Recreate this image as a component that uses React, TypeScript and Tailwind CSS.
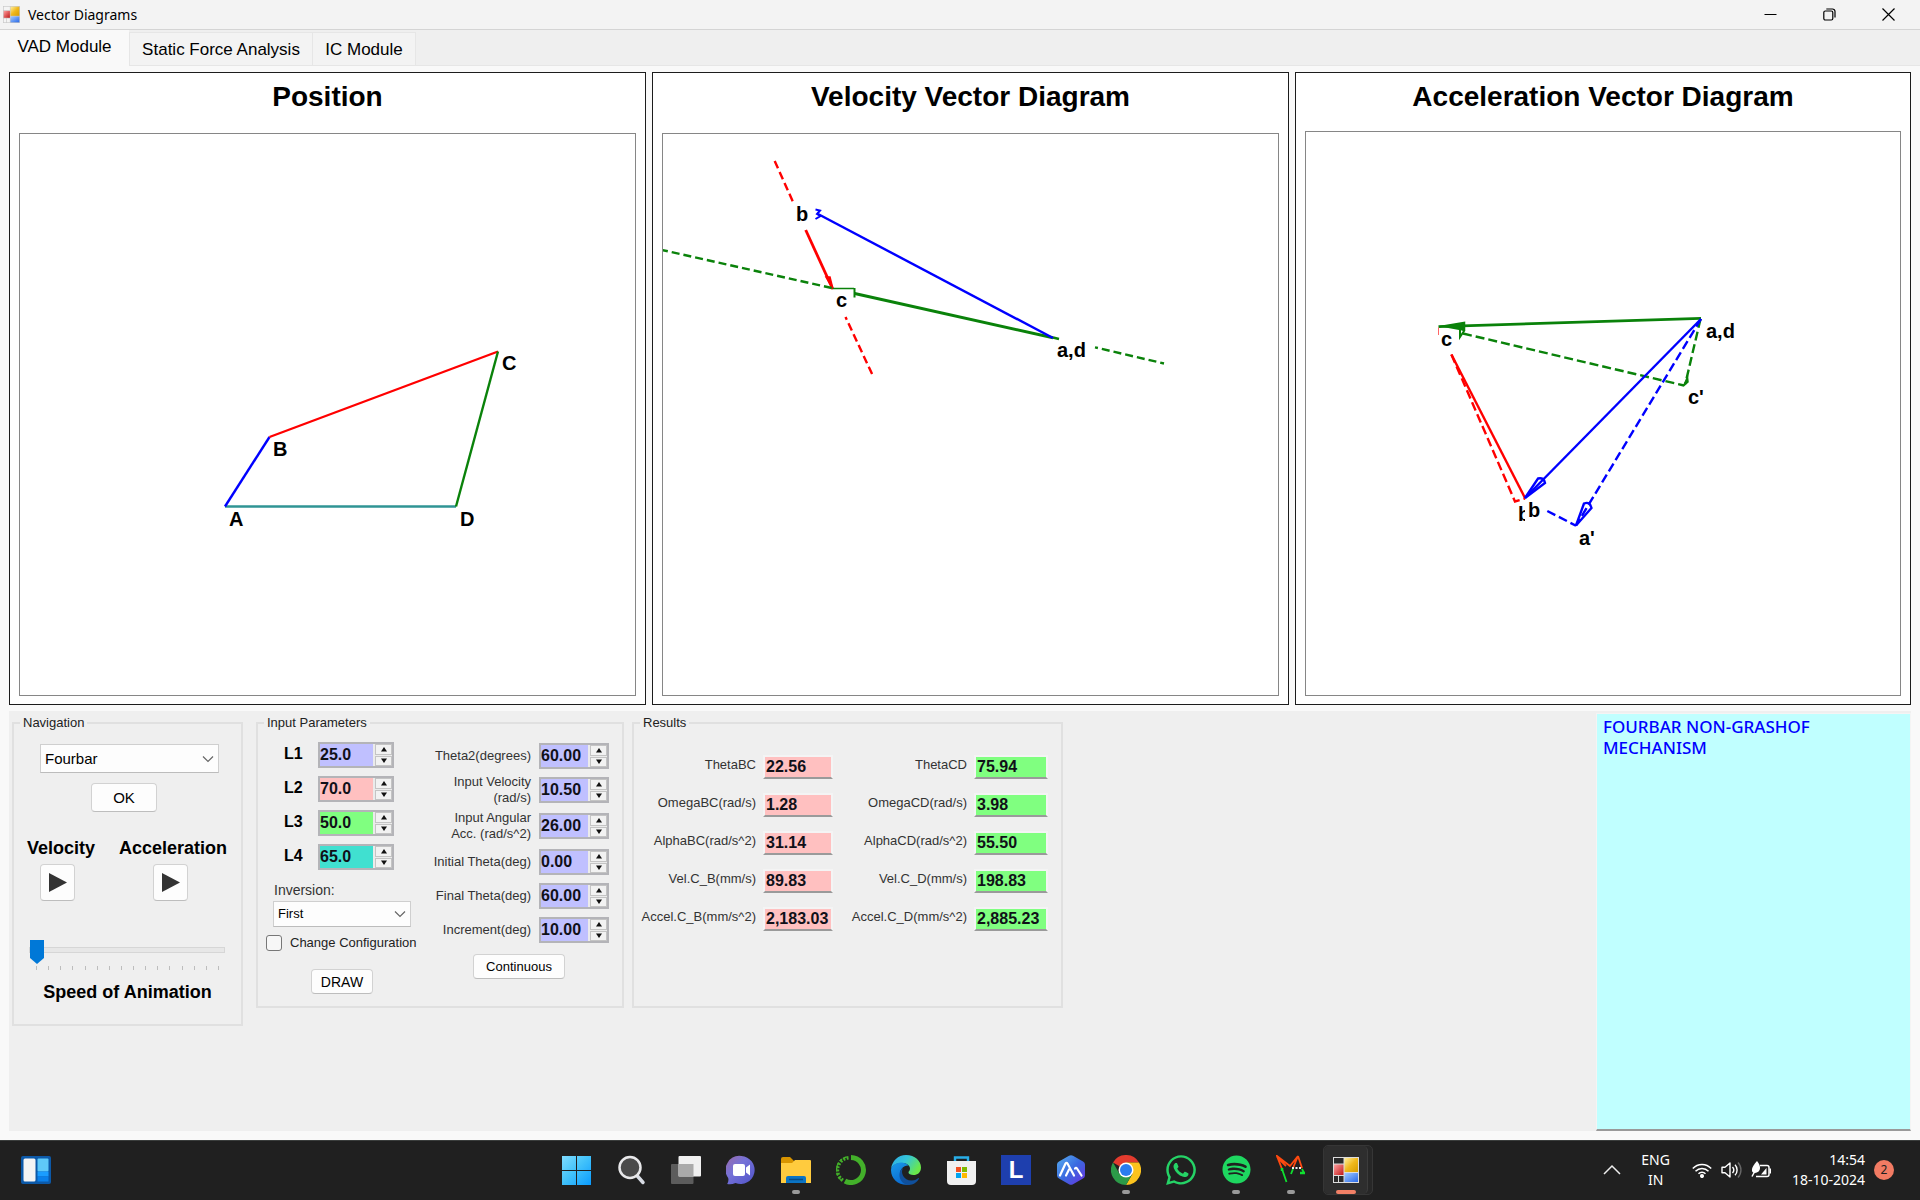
import React, { useState } from "react";
import { FaWhatsapp, FaSpotify } from "react-icons/fa";

type Tint = "blue" | "red" | "green" | "teal";

const tints: Record<Tint, string> = {
  blue: "bg-[#c0c0ff]",
  red: "bg-[#ffc0c0]",
  green: "bg-[#80ff80]",
  teal: "bg-[#40e0d0]",
};

const smallButton =
  "rounded-[4px] border border-[#d2d2d2] border-b-[#bdbdbd] bg-[#fdfdfd] text-center text-black";

function Spinner({ id, value, tint, wide }: { id: string; value: string; tint: Tint; wide?: boolean }) {
  const [text, setText] = useState(value);
  const step = (delta: number) => {
    const decimals = (value.split(".")[1] ?? "").length;
    setText((Number(text) + delta).toFixed(decimals));
  };
  return (
    <div
      className={`flex h-[26px] items-stretch border-2 border-[#b4b4b8] bg-[#ebebeb] ${wide ? "w-[76px]" : "w-[70px]"}`}
    >
      <input
        id={id}
        value={text}
        onChange={(e) => setText(e.target.value)}
        className={`min-w-0 flex-1 text-[16px] leading-5 font-bold text-[#101018] outline-none ${tints[tint]}`}
      />
      <div className="flex w-[19px] flex-col gap-px pl-[2px]">
        <button
          type="button"
          aria-label={`Increase ${id}`}
          onClick={() => step(1)}
          className="flex flex-1 items-center justify-center border border-[#c4c4c4] bg-[#f2f2f2]"
        >
          <svg width="8" height="5" viewBox="0 0 8 5">
            <path d="M4 0 7 4.500H1z" fill="#111" />
          </svg>
        </button>
        <button
          type="button"
          aria-label={`Decrease ${id}`}
          onClick={() => step(-1)}
          className="flex flex-1 items-center justify-center border border-[#c4c4c4] bg-[#f2f2f2]"
        >
          <svg width="8" height="5" viewBox="0 0 8 5">
            <path d="M4 5 7 .5H1z" fill="#111" />
          </svg>
        </button>
      </div>
    </div>
  );
}

function DropDown({ id, label, options, className }: { id: string; label: string; options: string[]; className: string }) {
  return (
    <div className={`relative ${className}`}>
      <select
        id={id}
        aria-label={label}
        className="h-full w-full appearance-none border border-[#cfcfcf] border-b-[#bcbcbc] bg-[#fdfdfd] pl-1 text-black outline-none"
      >
        {options.map((o) => (
          <option key={o}>{o}</option>
        ))}
      </select>
      <svg
        className="pointer-events-none absolute top-1/2 right-[5px] -translate-y-1/2"
        width="12"
        height="8"
        viewBox="0 0 12 8"
        fill="none"
        stroke="#666"
        strokeWidth="1.2"
      >
        <path d="M1 1.500 6 6.500 11 1.500" />
      </svg>
    </div>
  );
}

function Group({ title, className, children }: { title: string; className: string; children: React.ReactNode }) {
  return (
    <fieldset className={`border-2 border-[#e0e0e0] text-[13px] leading-4 ${className}`}>
      <legend className="ml-[6px] px-[3px] text-[#222]">{title}</legend>
      {children}
    </fieldset>
  );
}

function Chart({ title, titleClass, children }: { title: string; titleClass: string; children: React.ReactNode }) {
  return (
    <section className="flex flex-col border border-[#1c1c1c] bg-white px-[9px] pb-2">
      <h2 className={`text-center text-[28px] font-bold text-black ${titleClass}`}>{title}</h2>
      <div className="flex-1 border border-[#868686] bg-white">{children}</div>
    </section>
  );
}

const chartText = "font-['Liberation_Sans',sans-serif] text-[20px] font-bold";

function PositionDiagram() {
  return (
    <svg className="block h-auto w-full" viewBox="20 134 615 561" fill="none" strokeWidth="2.4">
      <path d="M225 506.500H456" stroke="#2f9494" />
      <path d="M225 506.500 269.500 437" stroke="#00f" />
      <path d="M269.500 437 498 351.500" stroke="#f00" />
      <path d="M498 351.500 456 506.500" stroke="#0a820a" />
      <g className={chartText} fill="#000">
        <text x="229" y="526">A</text>
        <text x="273" y="456">B</text>
        <text x="502" y="370">C</text>
        <text x="460" y="526">D</text>
      </g>
    </svg>
  );
}

function VelocityDiagram() {
  return (
    <svg className="block h-auto w-full" viewBox="663 134 615 561" fill="none" strokeWidth="2.4">
      <path d="M774.700 161 793.500 203" stroke="#f00" strokeDasharray="8 4" />
      <path d="M845.500 317 872.500 375" stroke="#f00" strokeDasharray="8 4" strokeDashoffset="5" />
      <path d="M805.700 230 832.700 289" stroke="#f00" strokeWidth="2.800" />
      <path d="M826 277 833 289 830 277z" stroke="#f00" fill="#f00" strokeWidth="1.500" />
      <path d="M660 249.500 831.800 288" stroke="#0a820a" strokeDasharray="8 4" />
      <path d="M832.600 288.500H854" stroke="#0a820a" strokeWidth="1.500" />
      <path d="M854.500 288v9.500" stroke="#0a820a" strokeWidth="2" />
      <path d="M854.700 293.500 1053 337.800" stroke="#0a820a" strokeWidth="3" />
      <path d="M1053 337.500 1059 339" stroke="#0a820a" />
      <path d="M1095 347.300 1164 363.500" stroke="#0a820a" strokeDasharray="8 4" strokeDashoffset="5" />
      <path d="M818 214 1053 338" stroke="#00f" />
      <path d="M815.500 209.500 820 210.500 817 214 820.500 216 815.500 219" stroke="#00f" strokeWidth="2" />
      <g className={chartText} fill="#000">
        <text x="796" y="221">b</text>
        <text x="836" y="307">c</text>
        <text x="1057" y="357">a,d</text>
      </g>
    </svg>
  );
}

function AccelerationDiagram() {
  return (
    <svg className="block h-auto w-full" viewBox="1306 132 594 562" fill="none" strokeWidth="2.4">
      <path d="M1438.500 326.700 1701 318.300" stroke="#0a820a" strokeWidth="2.800" />
      <path d="M1440 326.500 1464.500 322.500V331" stroke="#0a820a" fill="#0a820a" strokeWidth="1.500" />
      <path d="M1461 326.500 1464 331 1460 337V328" stroke="#0a820a" strokeWidth="2" />
      <path d="M1463 333.500 1684 385.500" stroke="#0a820a" strokeDasharray="9 4" />
      <path d="M1700.500 319 1685.300 384" stroke="#0a820a" strokeDasharray="9 4" />
      <path d="M1687.500 377 1688 382 1683.500 386z" stroke="#0a820a" fill="#0a820a" strokeWidth="1.500" />
      <path d="M1438.500 327.500V335" stroke="#f66" strokeWidth="1" />
      <path d="M1451.400 354.500 1525 498" stroke="#f00" />
      <path d="M1451.400 354.500 1515 501.500 1525 498.500" stroke="#f00" strokeDasharray="9 4" />
      <path d="M1701 319 1525 498" stroke="#00f" />
      <path d="M1525 498 1538 478.500Q1544 477 1545 483z" stroke="#00f" strokeWidth="2.400" />
      <path d="M1701 319 1576 525.500" stroke="#00f" strokeDasharray="9 4" />
      <path d="M1576 525.500 1584 503.500Q1590 501 1591.500 508z" stroke="#00f" strokeWidth="2.400" />
      <path d="M1547.300 511 1576 525.700" stroke="#00f" strokeDasharray="9 4" />
      <g className={chartText} fill="#000">
        <text x="1441" y="346">c</text>
        <text x="1706" y="338">a,d</text>
        <text x="1688" y="404">c&#39;</text>
        <text x="1518" y="521">b&#39;</text>
        <path d="M1525 502h20v22h-20z" fill="#fff" />
        <text x="1528" y="517">b</text>
        <text x="1579" y="545">a&#39;</text>
      </g>
    </svg>
  );
}

/* Window and taskbar icon of a WinForms application. */
function FormsIcon({ size, dark }: { size: number; dark?: boolean }) {
  return (
    <svg width={size} height={size} viewBox="0 0 26 26">
      <defs>
        <linearGradient id="fy" x1="0" y1="0" x2="1" y2="1">
          <stop offset="0" stopColor="#fff0a0" />
          <stop offset=".5" stopColor="#f0b81c" />
          <stop offset="1" stopColor="#d69c00" />
        </linearGradient>
        <linearGradient id="fr" x1="0" y1="0" x2="1" y2="1">
          <stop offset="0" stopColor="#ffa0a0" />
          <stop offset="1" stopColor="#c01818" />
        </linearGradient>
        <linearGradient id="fb" x1="0" y1="0" x2="1" y2="1">
          <stop offset="0" stopColor="#a0c8ff" />
          <stop offset="1" stopColor="#2a6ae8" />
        </linearGradient>
      </defs>
      <rect width="26" height="26" fill={dark ? "#ddd" : "#c8c8c8"} />
      <rect x="1" y="1" width="9.500" height="5.500" fill={dark ? "#2b2b2b" : "#f4f4f4"} />
      <rect x="1" y="7.500" width="9.500" height="10.500" fill="url(#fr)" />
      <rect x="1" y="19" width="4" height="6" fill={dark ? "#2b2b2b" : "#f4f4f4"} />
      <rect x="6" y="19" width="4.500" height="6" fill={dark ? "#2b2b2b" : "#f4f4f4"} />
      <rect x="11.500" y="1" width="13.500" height="14" fill="url(#fy)" />
      <rect x="11.500" y="16" width="13.500" height="9" fill="url(#fb)" />
    </svg>
  );
}

function WidgetsIcon() {
  return (
    <svg width="30" height="28" viewBox="0 0 30 28">
      <rect width="30" height="28" rx="2" fill="#0c59a8" />
      <rect x="2.500" y="2.500" width="12" height="23" rx="1.500" fill="#f4f4f4" />
      <rect x="16.500" y="2.500" width="11" height="13" rx="1" fill="#5fc9f8" />
      <rect x="16.500" y="15.500" width="11" height="5" fill="#1a9dff" />
      <rect x="16.500" y="20.500" width="11" height="5" fill="#0a80ea" />
    </svg>
  );
}

function StartIcon() {
  return (
    <svg width="30" height="30" viewBox="0 0 30 30">
      <defs>
        <linearGradient id="st" x1="0" y1="0" x2="1" y2="1">
          <stop offset="0" stopColor="#80dcff" />
          <stop offset=".45" stopColor="#45c4fa" />
          <stop offset="1" stopColor="#0a9bff" />
        </linearGradient>
      </defs>
      <path d="M1 1h14v14H1zM16 1h14v14H16zM1 16h14v14H1zM16 16h14v14H16z" fill="url(#st)" />
    </svg>
  );
}

function SearchIcon() {
  return (
    <svg width="30" height="30" viewBox="0 0 30 30" fill="none">
      <path d="m20.500 20 6.500 7.500" stroke="#d8dce4" strokeWidth="3.500" strokeLinecap="round" />
      <circle cx="14" cy="12.500" r="10.500" fill="#4a4a4a" stroke="#e8e8ea" strokeWidth="2.500" />
    </svg>
  );
}

function TaskViewIcon() {
  return (
    <svg width="30" height="30" viewBox="0 0 30 30">
      <rect x="0" y="9" width="22.500" height="20" rx="1" fill="#5c5c5c" />
      <rect x="7.500" y="1" width="22.500" height="20.500" rx="1" fill="#f0f0f0" />
      <rect x="7.500" y="9" width="15" height="12.500" fill="#aaa" />
    </svg>
  );
}

function ChatIcon() {
  return (
    <svg width="30" height="30" viewBox="0 0 30 30">
      <defs>
        <linearGradient id="ch" x1="0" y1="0" x2="1" y2="1">
          <stop offset="0" stopColor="#9a6aa8" />
          <stop offset=".4" stopColor="#7672d8" />
          <stop offset="1" stopColor="#4f52c8" />
        </linearGradient>
      </defs>
      <path d="M15.500 1a14 14 0 1 1-6 27Q5 30 1.200 29q1.800-3 1-6A14 14 0 0 1 15.500 1z" fill="url(#ch)" />
      <rect x="7" y="9" width="12" height="12" rx="2" fill="#fff" />
      <path d="m20 12.500 4-3v11l-4-3z" fill="#fff" />
    </svg>
  );
}

function FolderIcon() {
  return (
    <svg width="30" height="30" viewBox="0 0 30 30">
      <path d="M0 4a2 2 0 0 1 2-2h7l4 4v4H0z" fill="#d89400" />
      <path d="M0 8h11l3-3h15a1 1 0 0 1 1 1v22H0z" fill="#ffcb3e" />
      <path d="M5 28v-5a2 2 0 0 1 2-2h16a2 2 0 0 1 2 2v5z" fill="#0b74c4" />
      <path d="M8 24.500h14" stroke="#064b85" strokeWidth="1.500" />
    </svg>
  );
}

function RingIcon() {
  return (
    <svg width="30" height="30" viewBox="0 0 30 30" fill="none" stroke="#43b02a">
      <path d="M15 2.500a12.500 12.500 0 1 1-6 23.500" strokeWidth="5" />
      <path d="M12.500 2.700A12.500 12.500 0 0 0 7 25.500" strokeWidth="3.500" strokeDasharray="2 1.500" />
      <path d="M10.500 2A13.500 13.500 0 0 0 5 25" strokeWidth="1.500" strokeDasharray="3 2" />
    </svg>
  );
}

function EdgeIcon() {
  return (
    <svg width="30" height="30" viewBox="0 0 30 30">
      <defs>
        <linearGradient id="e1" x1="0" y1="0" x2="1" y2=".5">
          <stop offset="0" stopColor="#2ba8e8" />
          <stop offset=".5" stopColor="#35c6d8" />
          <stop offset="1" stopColor="#6ae84a" />
        </linearGradient>
        <linearGradient id="e2" x1="0" y1="0" x2=".5" y2="1">
          <stop offset="0" stopColor="#1a9ae8" />
          <stop offset="1" stopColor="#0a6ad0" />
        </linearGradient>
      </defs>
      <path d="M0 14C1 6 7 0 15 0c9 0 15 6 15 12.500 0 5-3.500 7.500-7.500 7.500-3 0-5-1-5-2.500s1.500-1.500 1.500-4C19 10 15 8 11 8 6 8 1.500 10 0 14z" fill="url(#e1)" />
      <path d="M0 15c0-4 5-8 11-7.500 3 .3 5 1.500 6.500 3C13 10 9 14 9 19c0 6 5 10 10 10.500C9 31.500 0 25 0 15z" fill="url(#e2)" />
      <path d="M12 13c-3 5 1 13 9 12.500 3 0 5-1.500 6.500-2.500.5-.2.800.2.500.6C26 27.500 22 30 18 30 12 29.500 8 25 8.500 19c.2-2.500 1.500-4.800 3.500-6z" fill="#10509c" />
    </svg>
  );
}

function StoreIcon() {
  return (
    <svg width="30" height="30" viewBox="0 0 30 30">
      <path d="M9 7V2.500h13V7" fill="none" stroke="#28aee8" strokeWidth="2.400" />
      <path d="M1 6h29v20a4 4 0 0 1-4 4H5a4 4 0 0 1-4-4z" fill="#f0f0f0" />
      <path d="M10 12h5v5h-5z" fill="#f25022" />
      <path d="M16 12h5v5h-5z" fill="#7fba00" />
      <path d="M10 18h5v5h-5z" fill="#00a4ef" />
      <path d="M16 18h5v5h-5z" fill="#ffb900" />
    </svg>
  );
}

function LIcon() {
  return (
    <span className="flex h-[30px] w-[30px] items-center justify-center bg-[#1e3fae] font-['Liberation_Sans',sans-serif] text-[24px] leading-none font-bold text-white">
      L
    </span>
  );
}

function HexIcon() {
  return (
    <svg width="30" height="30" viewBox="0 0 30 30">
      <defs>
        <linearGradient id="hx" x1="0" y1="0" x2="1" y2="1">
          <stop offset="0" stopColor="#58b0f0" />
          <stop offset=".5" stopColor="#3a6ae0" />
          <stop offset="1" stopColor="#6a30e0" />
        </linearGradient>
      </defs>
      <path d="M13 .8q2-1 4 0l10 5.700q2 1 2 3v11q0 2-2 3l-10 5.700q-2 1-4 0L3 23.500q-2-1-2-3v-11q0-2 2-3z" fill="url(#hx)" />
      <path d="M4 20.500 9.500 8.500q1-1.500 2 0l6.500 12M10 20.500l3-6M19 13.500q1-1.500 2 0l4.500 7" fill="none" stroke="#fff" strokeWidth="2.200" strokeLinecap="round" />
    </svg>
  );
}

function ChromeIcon() {
  return (
    <svg width="30" height="30" viewBox="0 0 30 30">
      <path d="M15 15 2 7.500A15 15 0 0 1 28 7.500H15z" fill="#e33b2e" />
      <path d="M15 7.500h13A15 15 0 0 1 15 30l6.500-11.300z" fill="#fcc31e" />
      <path d="M2 7.500 8.500 18.700 15 22.500l6 -3L15 30A15 15 0 0 1 2 7.500z" fill="#2c9a48" />
      <circle cx="15" cy="15" r="7.500" fill="#fff" />
      <circle cx="15" cy="15" r="6" fill="#2a7cf0" />
    </svg>
  );
}

function MechIcon() {
  return (
    <svg width="30" height="30" viewBox="0 0 30 30" fill="none" strokeWidth="1.800">
      <path d="M6 14 1 1l13 10L22 1M22 1l-5 12M22 1l4 12M1 2l9 9" stroke="#ff4a10" />
      <path d="M6 14 10.500 27M17 14l-2 5M26 14l2 4" stroke="#10e030" />
      <path d="M16 13h10" stroke="#eee" strokeDasharray="2 1.500" />
      <path d="M24 18h5M6 13v3" stroke="#10e030" strokeWidth="2.500" />
    </svg>
  );
}

const apps: { name: string; icon: React.ReactNode; running?: boolean; active?: boolean }[] = [
  { name: "Start", icon: <StartIcon /> },
  { name: "Search", icon: <SearchIcon /> },
  { name: "Task view", icon: <TaskViewIcon /> },
  { name: "Chat", icon: <ChatIcon /> },
  { name: "File Explorer", icon: <FolderIcon />, running: true },
  { name: "Anaconda", icon: <RingIcon /> },
  { name: "Edge", icon: <EdgeIcon /> },
  { name: "Store", icon: <StoreIcon /> },
  { name: "L", icon: <LIcon /> },
  { name: "Hex", icon: <HexIcon /> },
  { name: "Chrome", icon: <ChromeIcon />, running: true },
  { name: "WhatsApp", icon: <FaWhatsapp size={34} color="#25d366" /> },
  { name: "Spotify", icon: <FaSpotify size={29} color="#1ed760" />, running: true },
  { name: "Mechanism", icon: <MechIcon />, running: true },
  { name: "Vector Diagrams", icon: <FormsIcon size={26} dark />, active: true },
];

function Taskbar() {
  return (
    <footer className="grid h-[60px] grid-cols-[1fr_auto_1fr] items-center border-t border-[#3a3d3c] bg-[#202020] pb-[2px] font-['Noto_Sans',sans-serif] text-[14px] leading-5 text-white">
      <button type="button" aria-label="Widgets" className="ml-[21px] w-[30px]">
        <WidgetsIcon />
      </button>
      <nav className="flex pl-[2px]">
        {apps.map((app) => (
          <button
            key={app.name}
            type="button"
            aria-label={app.name}
            className="relative flex h-[50px] w-[55px] items-center justify-center"
          >
            {app.active && (
              <span className="absolute inset-y-0 left-1 w-[50px] rounded-[5px] border border-[#363636] bg-[#272727]">
                <span className="block h-full w-[44px] rounded-[5px] border-r border-[#3c3c3c] bg-[#2e2e2e]" />
              </span>
            )}
            <span className="relative">{app.icon}</span>
            {app.running && <span className="absolute bottom-[1px] h-1 w-2 rounded-full bg-[#9a9a9a]" />}
            {app.active && <span className="absolute bottom-[1px] h-1 w-5 rounded-full bg-[#f28066]" />}
          </button>
        ))}
      </nav>
      <div className="flex items-center justify-end pr-[26px]">
        <button type="button" aria-label="Show hidden icons" className="mr-5">
          <svg width="18" height="11" viewBox="0 0 18 11" fill="none" stroke="#eee" strokeWidth="1.500">
            <path d="m1 10 8-8 8 8" />
          </svg>
        </button>
        <p className="mr-[22px] text-center">
          ENG
          <br />
          IN
        </p>
        <svg className="mr-[9px]" width="20" height="16" viewBox="0 0 20 16" fill="none" stroke="#fff" strokeWidth="1.500">
          <path d="M.8 6.500a12.500 12.500 0 0 1 18.400 0M3.500 9.200a9 9 0 0 1 13 0M6.500 11.800a5 5 0 0 1 7 0" />
          <circle cx="10" cy="14" r="1.300" fill="#fff" />
        </svg>
        <svg className="mr-[9px]" width="21" height="18" viewBox="0 0 21 18" fill="none" stroke="#fff" strokeWidth="1.400">
          <path d="M1 6.200h3L9 2v14l-5-4.200H1z" strokeLinejoin="round" />
          <path d="M11.500 6a4.500 4.500 0 0 1 0 6M14 3.800a7.500 7.500 0 0 1 0 10.400" />
          <path d="M17 1.500a11 11 0 0 1 0 15" stroke="#666" />
        </svg>
        <svg className="mr-5" width="21" height="18" viewBox="0 0 21 18">
          <path d="M9 4.500h7a2 2 0 0 1 2 2v7a2 2 0 0 1-2 2H5" fill="none" stroke="#fff" strokeWidth="1.500" />
          <path d="M18.500 7.500h1.500v5h-1.500z" fill="#fff" />
          <path d="M6 0C9 4 10 7 8 10c-1 1.500-4 2.500-6 1.500C-.5 9 1.500 5 6 0z" fill="#fff" />
          <path d="M1 15.500 5 8" stroke="#fff" strokeWidth="1.500" />
          <path d="M10 13.500 15.500 7v6.500z" fill="#fff" />
        </svg>
        <p className="mr-[9px] text-right">
          14:54
          <br />
          18-10-2024
        </p>
        <span className="flex h-5 w-5 items-center justify-center rounded-full bg-[#f27b63] text-[12px] text-[#202020]">2</span>
      </div>
    </footer>
  );
}

const links: { name: string; value: string; tint: Tint }[] = [
  { name: "L1", value: "25.0", tint: "blue" },
  { name: "L2", value: "70.0", tint: "red" },
  { name: "L3", value: "50.0", tint: "green" },
  { name: "L4", value: "65.0", tint: "teal" },
];

const motion: { id: string; name: string; value: string }[] = [
  { id: "theta2", name: "Theta2(degrees)", value: "60.00" },
  { id: "input-velocity", name: "Input Velocity\n(rad/s)", value: "10.50" },
  { id: "input-acceleration", name: "Input Angular\nAcc. (rad/s^2)", value: "26.00" },
  { id: "initial-theta", name: "Initial Theta(deg)", value: "0.00" },
  { id: "final-theta", name: "Final Theta(deg)", value: "60.00" },
  { id: "increment", name: "Increment(deg)", value: "10.00" },
];

const results: [string, string, string, string][] = [
  ["ThetaBC", "22.56", "ThetaCD", "75.94"],
  ["OmegaBC(rad/s)", "1.28", "OmegaCD(rad/s)", "3.98"],
  ["AlphaBC(rad/s^2)", "31.14", "AlphaCD(rad/s^2)", "55.50"],
  ["Vel.C_B(mm/s)", "89.83", "Vel.C_D(mm/s)", "198.83"],
  ["Accel.C_B(mm/s^2)", "2,183.03", "Accel.C_D(mm/s^2)", "2,885.23"],
];

function ResultField({ name, value, tint }: { name: string; value: string; tint: Tint }) {
  return (
    <>
      <label htmlFor={name} className="text-right leading-[20px] whitespace-nowrap text-[#333]">
        {name}
      </label>
      <input
        id={name}
        readOnly
        value={value}
        className={`h-6 w-full border-2 border-[#f4f4f4] border-b-[#9a9a9a] pl-px text-[16px] leading-5 font-bold text-[#101018] outline-none ${tints[tint]}`}
      />
    </>
  );
}

function PlayButton({ label }: { label: string }) {
  return (
    <button type="button" aria-label={label} className={`flex h-[37px] w-[35px] items-center justify-center ${smallButton}`}>
      <svg width="18" height="19" viewBox="0 0 18 19">
        <path d="M0 0 18 9.500 0 19z" fill="#333" />
      </svg>
    </button>
  );
}

export default function App() {
  const [speed, setSpeed] = useState(0);
  return (
    <div className="flex min-h-screen flex-col bg-[#f9f9f9] font-['Liberation_Sans',Arial,sans-serif] text-black">
      <header className="flex h-[30px] items-center border-b border-[#d4d4d4] bg-[#f3f3f3] pl-[3px]">
        <FormsIcon size={17} />
        <h1 className="ml-2 flex-1 font-['Noto_Sans',sans-serif] text-[14px] leading-5">Vector Diagrams</h1>
        <div className="flex items-center gap-[46px] pr-[25px]">
          <button type="button" aria-label="Minimize">
            <svg width="13" height="13" viewBox="0 0 13 13" stroke="#000">
              <path d="M.5 6.500h12" />
            </svg>
          </button>
          <button type="button" aria-label="Restore">
            <svg width="13" height="13" viewBox="0 0 13 13" fill="none" stroke="#000" strokeWidth="1.200">
              <rect x=".8" y="3" width="9" height="9" rx="1.500" />
              <path d="M3.300 1h6.200a2.500 2.500 0 0 1 2.500 2.500v6" />
            </svg>
          </button>
          <button type="button" aria-label="Close">
            <svg width="13" height="13" viewBox="0 0 13 13" stroke="#000" strokeWidth="1.200">
              <path d="m.5.5 12 12m0-12-12 12" />
            </svg>
          </button>
        </div>
      </header>

      <nav role="tablist" className="flex h-9 items-end border-b border-[#e6e6e6] bg-[#efefef] text-[17px] leading-5">
        <button type="button" role="tab" aria-selected="true" className="-mb-px h-9 w-[129px] bg-[#f9f9f9] pb-[2px]">
          VAD Module
        </button>
        <button type="button" role="tab" aria-selected="false" className="h-[33px] w-[184px] border border-b-0 border-[#e6e6e6] bg-[#f3f3f3] pt-[2px]">
          Static Force Analysis
        </button>
        <button type="button" role="tab" aria-selected="false" className="h-[33px] w-[103px] border border-b-0 border-l-0 border-[#e6e6e6] bg-[#f3f3f3] pt-[2px]">
          IC Module
        </button>
      </nav>

      <main className="flex flex-1 flex-col px-[9px] pt-[6px] pb-[9px]">
        <div className="grid grid-cols-[637fr_637fr_616fr] gap-[6px]">
          <Chart title="Position" titleClass="pt-2 pb-[20px] leading-8">
            <PositionDiagram />
          </Chart>
          <Chart title="Velocity Vector Diagram" titleClass="pt-2 pb-[20px] leading-8">
            <VelocityDiagram />
          </Chart>
          <Chart title="Acceleration Vector Diagram" titleClass="pt-2 pb-[18px] leading-8">
            <AccelerationDiagram />
          </Chart>
        </div>

        <div className="mt-[6px] flex flex-1 items-start gap-[10px] bg-[#efefef] pl-[3px]">
          <Group title="Navigation" className="mt-1 w-[231px] pb-[22px]">
            <DropDown
              id="mechanism"
              label="Mechanism"
              options={["Fourbar", "Slider Crank"]}
              className="mt-[13px] ml-[26px] h-[29px] w-[179px] text-[15px]"
            />
            <button type="button" className={`mt-[10px] ml-[77px] block h-[29px] w-[66px] text-[15px] ${smallButton}`}>
              OK
            </button>
            <div className="mt-[26px] flex gap-6 pl-[13px] text-[18px] leading-5 font-bold">
              <span>Velocity</span>
              <span>Acceleration</span>
            </div>
            <div className="mt-[6px] flex gap-[78px] pl-[26px]">
              <PlayButton label="Play velocity" />
              <PlayButton label="Play acceleration" />
            </div>
            <input
              id="speed"
              type="range"
              min={0}
              max={15}
              value={speed}
              onChange={(e) => setSpeed(Number(e.target.value))}
              className="mt-[39px] ml-[15px] block h-5 w-[196px] appearance-none bg-transparent [&::-webkit-slider-runnable-track]:h-[6px] [&::-webkit-slider-runnable-track]:border [&::-webkit-slider-runnable-track]:border-[#d6d6d6] [&::-webkit-slider-runnable-track]:bg-[#e7e7e7] [&::-webkit-slider-thumb]:-mt-2 [&::-webkit-slider-thumb]:h-6 [&::-webkit-slider-thumb]:w-[14px] [&::-webkit-slider-thumb]:appearance-none [&::-webkit-slider-thumb]:bg-[#0078d7] [&::-webkit-slider-thumb]:[clip-path:polygon(0_0,100%_0,100%_75%,50%_100%,0_75%)]"
            />
            <div className="mt-[6px] ml-[22px] flex w-[183px] justify-between">
              {Array.from({ length: 16 }, (_, i) => (
                <span key={i} className="h-1 w-px bg-[#bdbdbd]" />
              ))}
            </div>
            <label htmlFor="speed" className="mt-3 block text-center text-[18px] leading-5 font-bold">
              Speed of Animation
            </label>
          </Group>

          <Group title="Input Parameters" className="mt-1 ml-[3px] w-[368px] pb-3">
            <div className="flex">
              <div className="w-[162px] pt-[11px]">
                <div className="flex flex-col gap-2">
                  {links.map((l) => (
                    <div key={l.name} className="flex pl-[26px]">
                      <label htmlFor={l.name} className="w-[34px] pt-[2px] text-[16px] leading-5 font-bold">
                        {l.name}
                      </label>
                      <Spinner id={l.name} value={l.value} tint={l.tint} wide />
                    </div>
                  ))}
                </div>
                <label htmlFor="inversion" className="mt-3 ml-4 block text-[14px] text-[#333]">
                  Inversion:
                </label>
                <DropDown
                  id="inversion"
                  label="Inversion"
                  options={["First", "Second", "Third", "Fourth"]}
                  className="mt-[3px] ml-[15px] h-[26px] w-[138px]"
                />
                <label className="mt-2 ml-2 flex items-center gap-2 whitespace-nowrap text-[#222]">
                  <input type="checkbox" className="h-4 w-4 appearance-none rounded-[3px] border border-[#777] bg-[#f7f7f7] checked:bg-[#0078d7]" />
                  Change Configuration
                </label>
                <button type="button" className={`mt-[18px] ml-[53px] block h-[25px] w-[62px] text-[14px] ${smallButton}`}>
                  DRAW
                </button>
              </div>
              <div className="flex-1 pt-2">
                <div className="grid grid-cols-[1fr_70px] grid-rows-[34px_34px_38px_34px_34px_34px] items-center gap-x-2 pr-[13px]">
                  {motion.map((m) => (
                    <React.Fragment key={m.id}>
                      <label htmlFor={m.id} className="text-right whitespace-pre-line text-[#333]">
                        {m.name}
                      </label>
                      <Spinner id={m.id} value={m.value} tint="blue" />
                    </React.Fragment>
                  ))}
                </div>
                <button type="button" className={`mt-[7px] ml-[53px] block h-[25px] w-[92px] ${smallButton}`}>
                  Continuous
                </button>
              </div>
            </div>
          </Group>

          <Group title="Results" className="mt-1 -ml-[2px] w-[431px] pb-[75px]">
            <div className="grid grid-cols-[122px_70px_127px_74px] gap-x-[7px] gap-y-[14px] pt-6">
              {results.map(([a, av, b, bv]) => (
                <React.Fragment key={a}>
                  <ResultField name={a} value={av} tint="red" />
                  <ResultField name={b} value={bv} tint="green" />
                </React.Fragment>
              ))}
            </div>
          </Group>

          <textarea
            aria-label="Mechanism type"
            readOnly
            value={"FOURBAR NON-GRASHOF\nMECHANISM"}
            className="mt-[2px] ml-auto w-[315px] resize-none self-stretch border border-[#f4f4f4] border-b-2 border-b-[#9a9a9a] bg-[#c0ffff] px-[6px] py-[2px] font-['Noto_Sans',sans-serif] text-[17px] leading-[21px] font-medium text-[#0000ff] outline-none"
          />
        </div>
      </main>

      <Taskbar />
    </div>
  );
}
